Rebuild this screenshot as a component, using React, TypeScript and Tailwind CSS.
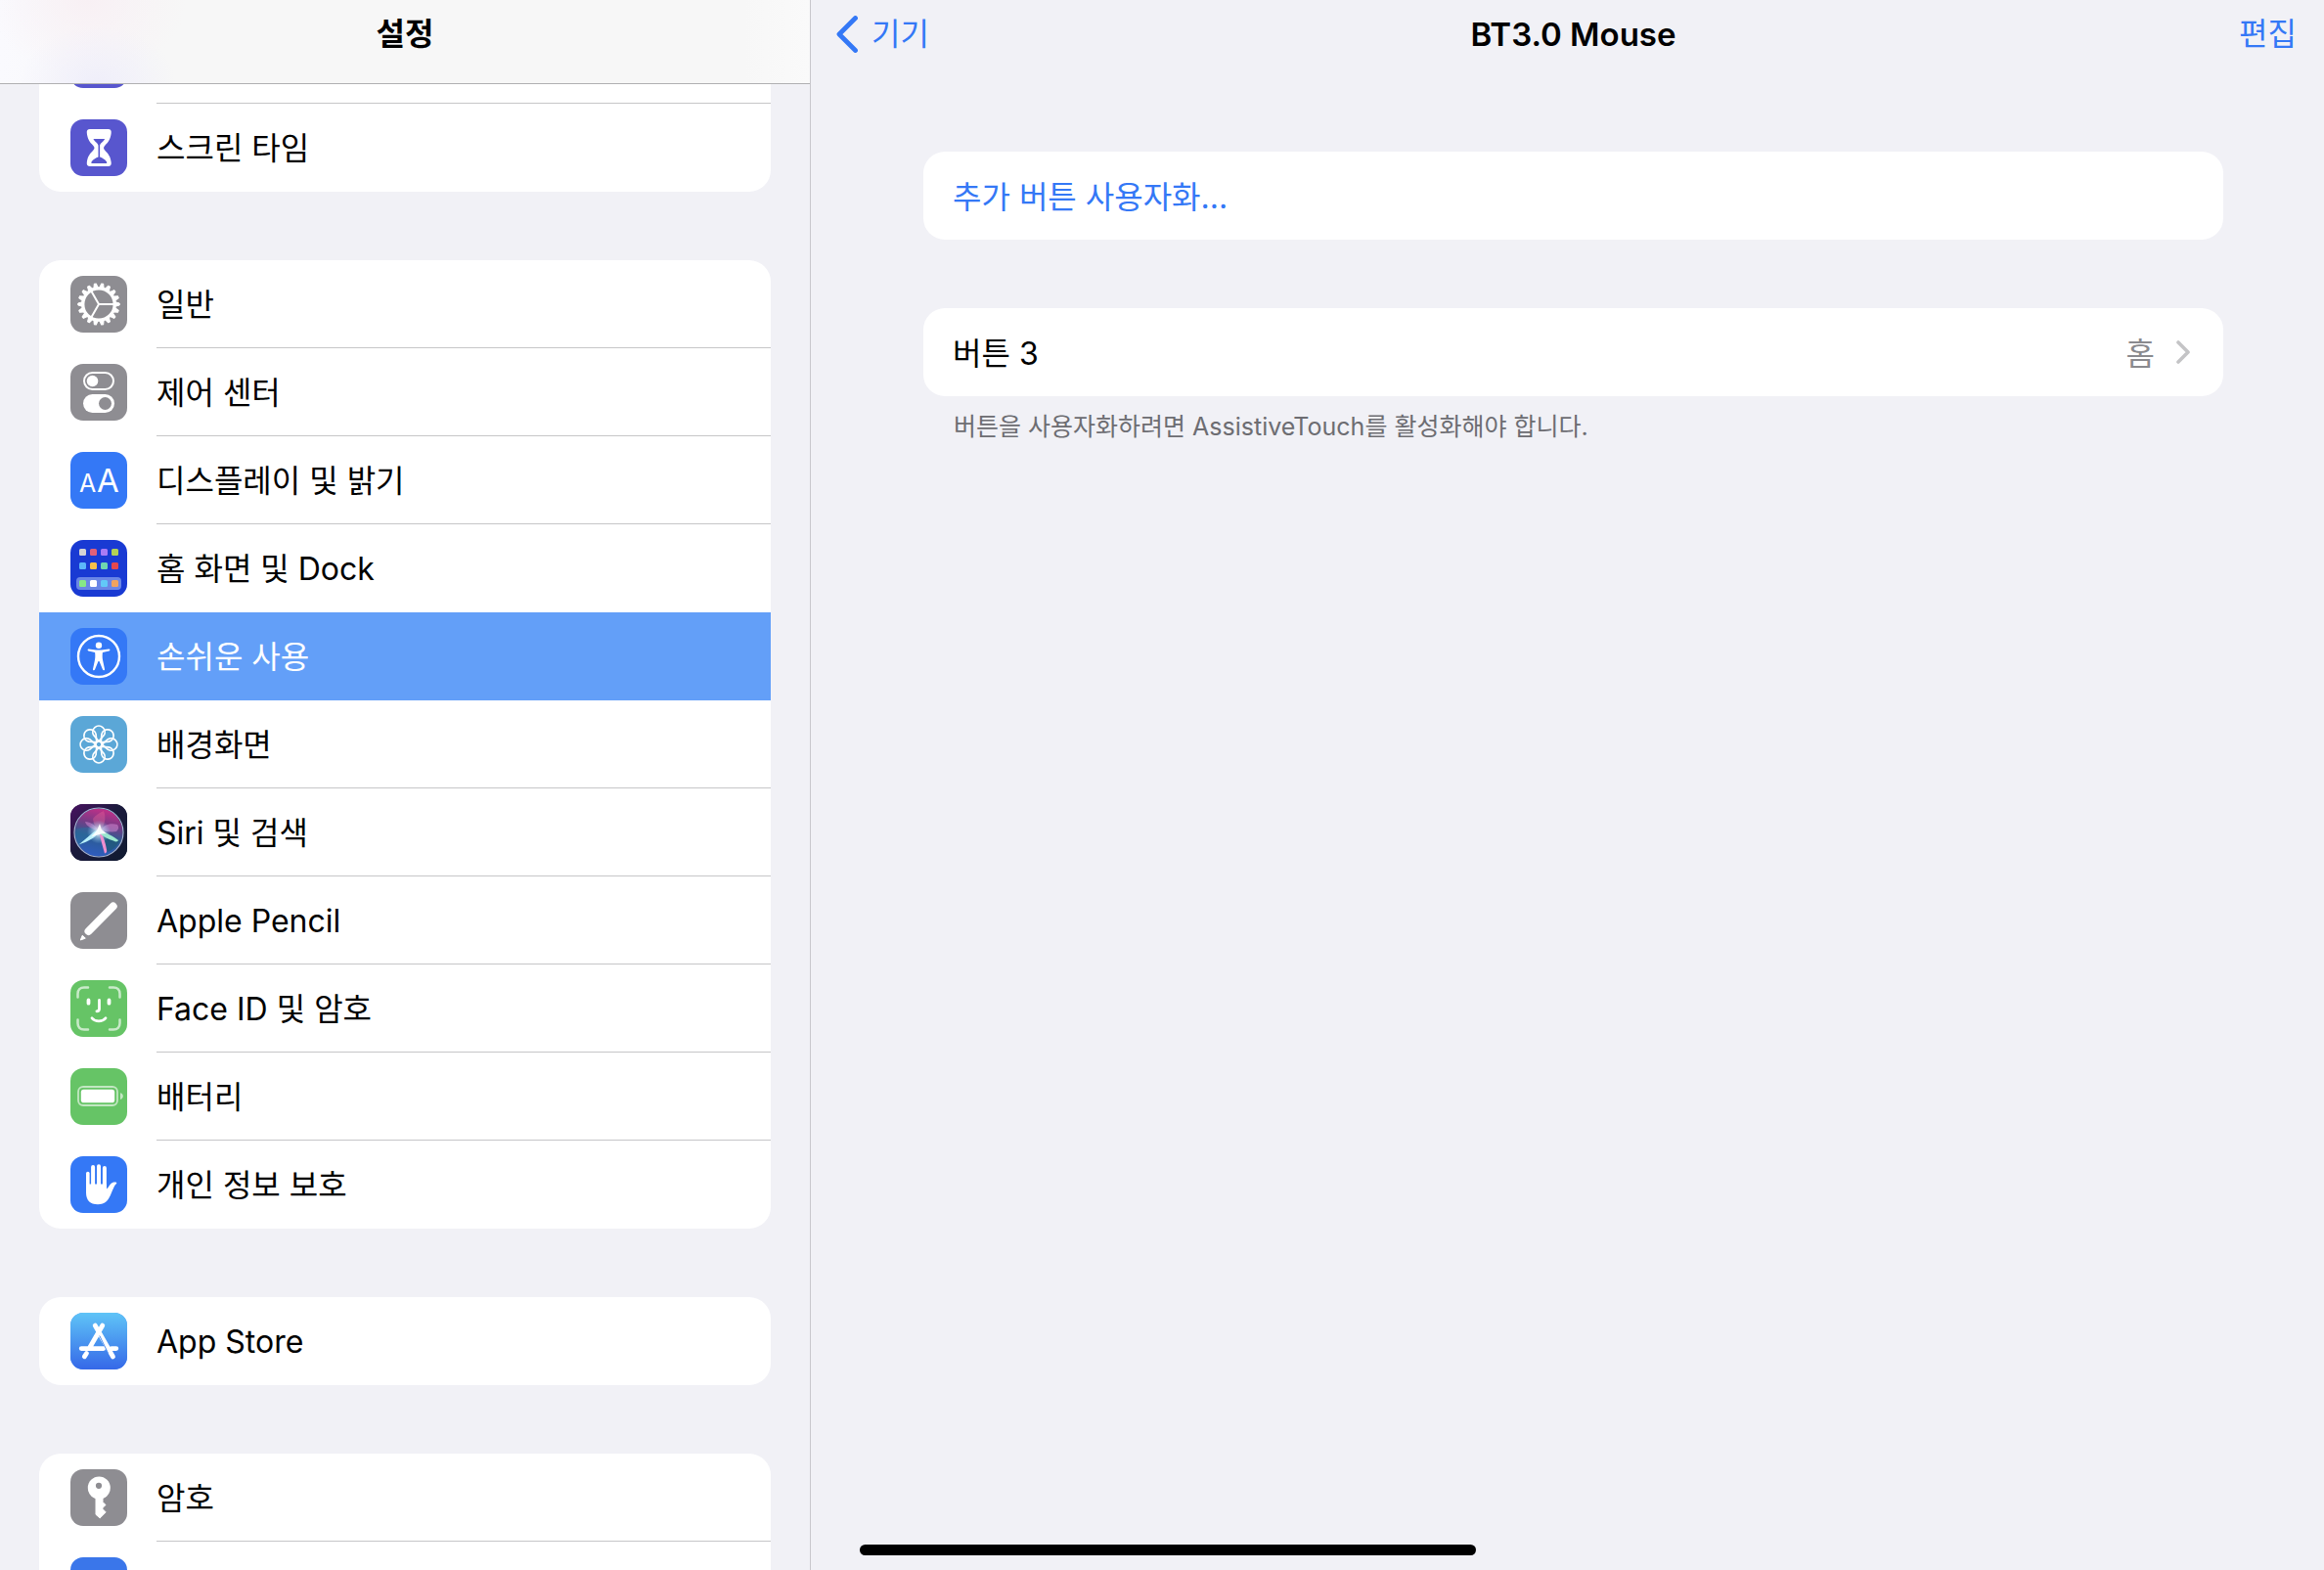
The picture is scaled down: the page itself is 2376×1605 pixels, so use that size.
import type { ReactNode } from 'react';
import { clsx } from 'clsx';

type SettingItem = {
  label: string;
  tile: string;
  icon: ReactNode;
  selected?: boolean;
  hideDivider?: boolean;
};

const HourglassIcon = () => (
  <>
    <path
      d="M20 10h18.500c2.500 0 3.500 1.500 3.200 4-.7 6.500-3.200 9.500-6.200 12.500-2 2-2 3.500 0 5.500 3 3 5.500 6 6.200 12 .3 2.500-.7 4-3.200 4H20c-2.500 0-3.500-1.500-3.200-4 .7-6 3.200-9 6.200-12 2-2 2-3.500 0-5.500-3-3-5.500-6-6.200-12.500-.3-2.500.7-4 3.200-4z"
      fill="#fff"
    />
    <path d="M23.500 20h11.600c-.8 2.500-5 4.500-5 7v11.500c2.500 1 5.500 2.600 7 5 .5 1-.1 1.500-1 1.500H22.500c-.9 0-1.500-.5-1-1.500 1.500-2.400 4.500-4 7-5V27c0-2.500-4.200-4.500-5-7z" fill="#5856ce" />
  </>
);

const GearIcon = () => (
  <g fill="none" stroke="#fff">
    {Array.from({ length: 18 }, (_, i) => (
      <path
        key={i}
        d="M46 26.800l4.200 1.200v2L46 31.200z"
        fill="#fff"
        strokeWidth="1"
        strokeLinejoin="round"
        transform={`rotate(${i * 20} 29 29)`}
      />
    ))}
    <circle cx="29" cy="29" r="16.200" strokeWidth="3.200" />
    <path d="M29 29h16M29 29l-8-13.900M29 29l-8 13.900" strokeWidth="2" />
  </g>
);

const TogglesIcon = () => (
  <>
    <rect x="14" y="9" width="30" height="17" rx="8.500" fill="none" stroke="#fff" strokeWidth="2" />
    <circle cx="22.500" cy="17.500" r="5.800" fill="#fff" />
    <rect x="13" y="31" width="32" height="19" rx="9.500" fill="#fff" />
    <circle cx="35.500" cy="40.500" r="6.500" fill="#8e8d92" />
  </>
);

const TextSizeIcon = () => (
  <g fill="#fff" fontFamily="Inter, sans-serif">
    <text x="9" y="41" fontSize="25">A</text>
    <text x="27" y="41" fontSize="33">A</text>
  </g>
);

const homeApps = [
  ['#d4d4d4', '#e0607a', '#a97bf5', '#b2d156'],
  ['#5cb8fa', '#f7c04a', '#6fd6b0', '#e5484d'],
  ['#87e887', '#ffffff', '#62c8f8', '#f0a35e'],
];

const HomeGridIcon = () => (
  <>
    <rect x="6" y="38" width="46" height="13" rx="4" fill="#6a86e6" />
    {homeApps.map((row, y) =>
      row.map((color, x) => (
        <rect key={color} x={9 + x * 11} y={[9, 23, 41][y]} width="7" height="7" rx="1.500" fill={color} />
      )),
    )}
  </>
);

const AccessibilityIcon = () => (
  <>
    <circle cx="29" cy="29" r="21" fill="none" stroke="#fff" strokeWidth="2.400" />
    <circle cx="29" cy="17.700" r="3.200" fill="#fff" />
    <path
      d="M18.800 21.400l7.400 1.200h5.600l7.400-1.200c1.500-.2 1.700 1.700.3 2l-6.600 1.500c-.5 4.300-.2 6.300.4 9l1.700 8c.3 1.500-1.500 1.900-2 .6L29.500 34h-1l-3.500 8.500c-.5 1.300-2.300.9-2-.6l1.700-8c.6-2.700.9-4.700.4-9l-6.600-1.500c-1.400-.3-1.200-2.200.3-2z"
      fill="#fff"
    />
  </>
);

const FlowerIcon = () => (
  <g fill="none" stroke="#fff" strokeWidth="1.700">
    {[0, 45, 90, 135, 180, 225, 270, 315].map((angle) => (
      <path
        key={angle}
        d="M29 25.800L23.700 19.600A6.200 6.200 0 1 1 34.300 19.600z"
        transform={`rotate(${angle} 29 29)`}
      />
    ))}
    <circle cx="29" cy="29" r="3.200" />
  </g>
);

const SiriIcon = () => (
  <>
    <defs>
      <linearGradient id="siri-tile" x1="0" y1="0" x2="1" y2="1">
        <stop offset="0" stopColor="#4a1262" />
        <stop offset=".45" stopColor="#1b1a3c" />
        <stop offset="1" stopColor="#101b30" />
      </linearGradient>
      <linearGradient id="siri-orb" x1=".6" y1="0" x2=".4" y2="1">
        <stop offset="0" stopColor="#c42f88" />
        <stop offset=".3" stopColor="#7c3a86" />
        <stop offset=".6" stopColor="#2b5c92" />
        <stop offset="1" stopColor="#2f5cc0" />
      </linearGradient>
      <radialGradient id="siri-glow">
        <stop offset="0" stopColor="#fff" />
        <stop offset=".4" stopColor="#d4f0ff" stopOpacity=".6" />
        <stop offset="1" stopColor="#8fd0ff" stopOpacity="0" />
      </radialGradient>
    </defs>
    <rect width="58" height="58" fill="url(#siri-tile)" />
    <circle cx="29" cy="29" r="24.500" fill="url(#siri-orb)" />
    <path d="M30 29C26 24 16 22 6 26c-2 7 0 12 3 16 7-3 17-7 21-13z" fill="#2a6fa0" opacity=".5" />
    <path d="M30 29c7 1 14 5 20 9-3 6-7 9-12 11-4-6-7-13-8-20z" fill="#1d5670" opacity=".6" />
    <path d="M29 28C24 26 16 23 15 18c5 0 12 4 14 10zM31 27c2-5 9-8 17-6 2 3 1 5-1 7-5 1-11 0-16-1z" fill="#d98fd8" opacity=".5" />
    <path d="M34 7c3 7 1 15-4 21-6-4-6-9-7-13 3-4 7-6 11-8z" fill="#f06a9c" opacity=".35" />
    <circle cx="29" cy="28.500" r="12" fill="url(#siri-glow)" />
    <path d="M30 26.500c-3-.5-6 1.500-9 4.500L8.500 41.500c4.500-1.500 12-4.500 17-8.500z" fill="#b9f0fb" />
    <path d="M29.500 29c1.500 8 4 16 5.500 21.500 2-.5 2.500-2 2-4C36 40 34 34 31.500 29z" fill="#ee8fcf" />
    <path d="M29 26c7 3 15 7 20 11-1 2-3 1.500-5 .5-5-1.500-10-4-15-8z" fill="#9be8cf" />
    <path d="M30 20l1.800 6 5 4-5.500.5-5 1.500-5 1.500 6-7z" fill="#fff" opacity=".9" />
    <circle cx="29" cy="29" r="25" fill="none" stroke="#a3b4d4" strokeWidth="1.200" />
  </>
);

const PencilIcon = () => (
  <>
    <path d="M43.700 14.500L18.500 40" stroke="#fff" strokeWidth="8" strokeLinecap="round" />
    <path d="M12.300 44.200l3 3-5 1.800z" fill="#fff" stroke="#fff" strokeWidth="1" strokeLinejoin="round" />
  </>
);

const FaceIcon = () => (
  <g fill="none" stroke="#fff" strokeLinecap="round">
    <path
      d="M7.500 17.500V14c0-4 2.500-6.500 6.500-6.500h4M40 7.500h4c4 0 6.500 2.500 6.500 6.500v3.500M50.500 40.500V44c0 4-2.500 6.500-6.500 6.500h-4M18 50.500h-4c-4 0-6.500-2.500-6.500-6.500v-3.500"
      strokeWidth="2.500"
      opacity=".65"
    />
    <path d="M18.500 20.500v3.200M39.500 20.500v3.200" strokeWidth="3.800" />
    <path d="M29.500 20.500v8.800c0 1.800-.8 2.500-2.600 2.500M22 38.800c3.500 4 10.500 4 14 0" strokeWidth="2.800" />
  </g>
);

const BatteryIcon = () => (
  <>
    <rect x="8" y="19" width="40" height="19" rx="5" fill="none" stroke="#fff" strokeWidth="1.800" opacity=".6" />
    <rect x="10.800" y="21.800" width="34.400" height="13.400" rx="2.800" fill="#fff" />
    <path d="M51 25.300c3.800 1 3.800 5.700 0 6.700z" fill="#fff" opacity=".6" />
  </>
);

const HandIcon = () => (
  <>
    <g fill="none" stroke="#fff" strokeLinecap="round">
      <path d="M17.800 17.500V36" strokeWidth="3.600" />
      <path d="M23.100 11V32M29 10.200V32M34.900 12V34" strokeWidth="4" />
    </g>
    <path d="M16 28.500h20.900v5.200c2.300-2 3.800-6 6.100-6.700 2-.7 4.500-.6 4.300.4-.2.900-1.500 1.300-2.300 3.100-3.200 6.700-4.800 12.500-8 15.500-2.500 2.300-5.500 3.200-9 3.200-8 0-12-4-12-12.200z" fill="#fff" />
  </>
);

const AppStoreIcon = () => (
  <>
    <defs>
      <linearGradient id="app-store-tile" x1="0" y1="0" x2="0" y2="1">
        <stop offset="0" stopColor="#5fc4f7" />
        <stop offset="1" stopColor="#3568e8" />
      </linearGradient>
    </defs>
    <rect width="58" height="58" fill="url(#app-store-tile)" />
    <g fill="none" stroke="#fff" strokeWidth="4.800" strokeLinecap="round">
      <path d="M32.800 13L19.500 36M16.500 41.500l-2.200 3.300M25.200 13l18.300 32M11.200 36.600h22.500M42 36.600h4.800" />
    </g>
    <path d="M29.800 23.500l8.800 18" stroke="#4a8cf0" strokeWidth="1" />
  </>
);

const KeyIcon = () => (
  <>
    <path d="M26 28h7v5.500l3 3-3 2.800v1.400l3.200 3.200-6 6L26 46.300z" fill="#fff" stroke="#fff" strokeWidth="1" strokeLinejoin="round" />
    <circle cx="29.300" cy="19" r="11.500" fill="#fff" />
    <circle cx="29" cy="16.800" r="3.100" fill="#8e8d92" />
  </>
);

const groups: SettingItem[][] = [
  [
    { label: '', tile: 'bg-[#5856ce]', icon: null },
    { label: '스크린 타임', tile: 'bg-[#5856ce]', icon: <HourglassIcon /> },
  ],
  [
    { label: '일반', tile: 'bg-[#8e8d92]', icon: <GearIcon /> },
    { label: '제어 센터', tile: 'bg-[#8e8d92]', icon: <TogglesIcon /> },
    { label: '디스플레이 및 밝기', tile: 'bg-[#3478f6]', icon: <TextSizeIcon /> },
    { label: '홈 화면 및 Dock', tile: 'bg-[#193ad3]', icon: <HomeGridIcon />, hideDivider: true },
    { label: '손쉬운 사용', tile: 'bg-[#3478f6]', icon: <AccessibilityIcon />, selected: true, hideDivider: true },
    { label: '배경화면', tile: 'bg-[#5ba7d7]', icon: <FlowerIcon /> },
    { label: 'Siri 및 검색', tile: 'bg-[#1b1a3c]', icon: <SiriIcon /> },
    { label: 'Apple Pencil', tile: 'bg-[#8e8d92]', icon: <PencilIcon /> },
    { label: 'Face ID 및 암호', tile: 'bg-[#66c466]', icon: <FaceIcon /> },
    { label: '배터리', tile: 'bg-[#66c466]', icon: <BatteryIcon /> },
    { label: '개인 정보 보호', tile: 'bg-[#3478f6]', icon: <HandIcon /> },
  ],
  [{ label: 'App Store', tile: 'bg-[#4a93f0]', icon: <AppStoreIcon /> }],
  [
    { label: '암호', tile: 'bg-[#8e8d92]', icon: <KeyIcon /> },
    { label: '', tile: 'bg-[#3a76ea]', icon: null },
  ],
];

function SettingRow({ item, last }: { item: SettingItem; last: boolean }) {
  const content = (
    <>
      <span className={clsx('block size-[58px] shrink-0 overflow-hidden rounded-[13px]', item.tile)}>
        <svg viewBox="0 0 58 58" className="size-full" aria-hidden="true">
          {item.icon}
        </svg>
      </span>
      <span
        className={clsx(
          'flex h-full flex-1 items-center border-b pt-[3px]',
          last || item.hideDivider ? 'border-transparent' : 'border-[#c6c6c8]',
        )}
      >
        {item.label}
      </span>
    </>
  );
  const className = clsx(
    'flex h-[90px] items-center gap-[30px] pl-8',
    item.selected && 'bg-[#639ff8] text-white',
  );

  if (!item.label) {
    return <li className={className} aria-hidden="true">{content}</li>;
  }

  return (
    <li>
      <a href="#" aria-current={item.selected ? 'page' : undefined} className={className}>
        {content}
      </a>
    </li>
  );
}

function Sidebar() {
  return (
    <aside className="relative h-full w-[829px] shrink-0 overflow-hidden border-r border-[#c8c7cc]">
      <header className="absolute inset-x-0 top-0 z-10 flex h-[86px] justify-center border-b border-[#b0b0b2] bg-[#f7f7f7] bg-[radial-gradient(ellipse_80px_60px_at_100px_86px,#efeefa,transparent),radial-gradient(ellipse_100px_80px_at_90px_0px,#f8f0f4,transparent),linear-gradient(to_right,#fafafe,#f7f7f7_160px,#f7f7f7_760px,#fafafa)]">
        <h1 className="flex h-[70px] items-center font-semibold">설정</h1>
      </header>
      <nav className="flex flex-col gap-[70px] px-10 pt-4">
        {groups.map((group, index) => (
          <ul
            key={index}
            className={clsx('overflow-hidden bg-white', index === 0 ? 'rounded-b-[22px]' : 'rounded-[22px]')}
          >
            {group.map((item, i) => (
              <SettingRow key={i} item={item} last={i === group.length - 1} />
            ))}
          </ul>
        ))}
      </nav>
    </aside>
  );
}

function DevicePanel() {
  return (
    <main className="flex h-full flex-1 flex-col">
      <header className="grid h-[70px] grid-cols-3 items-center pr-7 pl-[26px]">
        <a href="#" className="flex items-center gap-[14px] justify-self-start text-[#3478f6]">
          <svg viewBox="0 0 22 38" className="h-[38px] w-[22px]" fill="none" aria-hidden="true">
            <path d="M19.500 2.500L3 19l16.500 16.500" stroke="currentColor" strokeWidth="4.800" strokeLinecap="round" strokeLinejoin="round" />
          </svg>
          기기
        </a>
        <h2 className="pl-[14px] text-center text-[33px] font-semibold">BT3.0 Mouse</h2>
        <button type="button" className="justify-self-end text-[#3478f6]">편집</button>
      </header>

      <div className="flex flex-col pt-[85px] pr-[103px] pl-[115px]">
        <button type="button" className="h-[90px] rounded-[22px] bg-white px-[30px] pt-[3px] text-left text-[#3478f6]">
          추가 버튼 사용자화...
        </button>
        <a href="#" className="mt-[70px] flex h-[90px] items-center rounded-[22px] bg-white pr-[34px] pl-[30px]">
          <span className="flex-1 pt-[3px]">버튼 3</span>
          <span className="mr-[22px] pt-[3px] text-[#8a8a8e]">홈</span>
          <svg viewBox="0 0 14 24" className="h-6 w-[14px]" fill="none" aria-hidden="true">
            <path d="M2 2l10 10L2 22" stroke="#c4c4c6" strokeWidth="3.600" strokeLinecap="round" strokeLinejoin="round" />
          </svg>
        </a>
        <p className="mt-[13px] px-[31px] text-[25px] leading-[36px] text-[#6d6d72]">
          버튼을 사용자화하려면 AssistiveTouch를 활성화해야 합니다.
        </p>
      </div>

      <div className="mt-auto mb-[15px] ml-[50px] h-[11px] w-[630px] rounded-full bg-black" />
    </main>
  );
}

export default function App() {
  return (
    <div className="flex h-screen overflow-hidden bg-[#f1f1f6] font-[Inter,'Noto_Sans_CJK_KR',sans-serif] text-[32px] leading-[48px] text-black">
      <Sidebar />
      <DevicePanel />
    </div>
  );
}
